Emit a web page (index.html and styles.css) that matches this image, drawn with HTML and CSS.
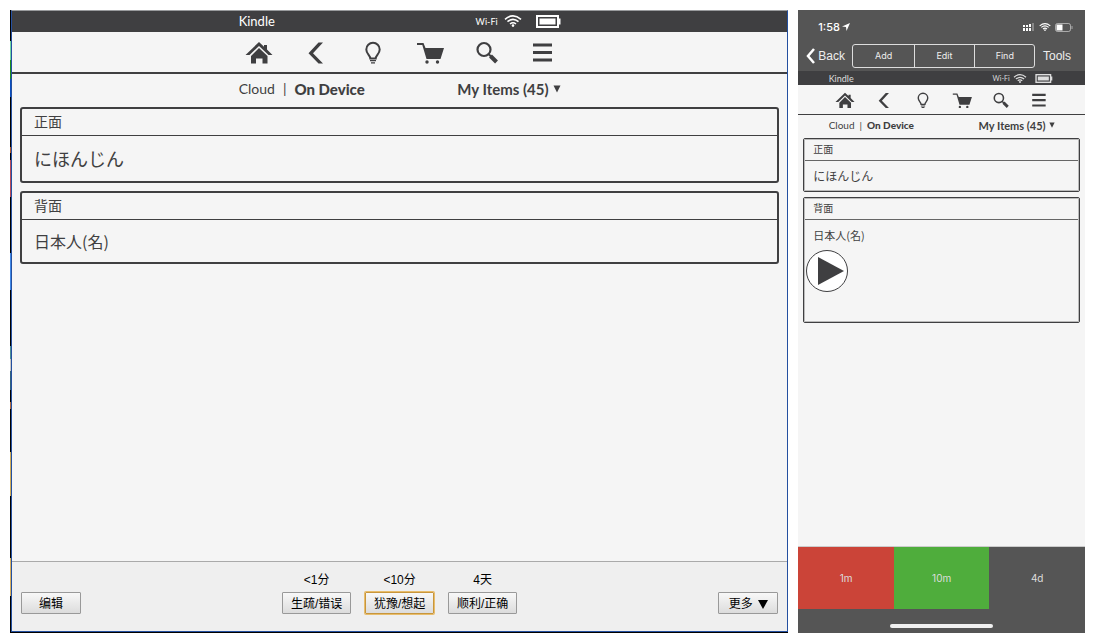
FILE: index.html
```html
<!DOCTYPE html>
<html lang="zh-CN">
<head>
<meta charset="utf-8">
<meta name="viewport" content="width=device-width, initial-scale=1">
<title>Kindle</title>
<link rel="stylesheet" href="styles.css">
</head>
<body>
<svg class="sprite" aria-hidden="true">
  <symbol id="home" viewBox="0 0 28 24">
    <path d="M14 1 19 5.800V4H22V8.600L27.500 14H23.500L14 5 4.500 14H.5Z"/>
    <path d="M14 7 22.500 15V22.500H17.500V17.500H11V22.500H6V15Z"/>
  </symbol>
  <symbol id="back" viewBox="0 0 28 24"><path d="M16.500 1.500H21L11 12.200 21 22.500H16.500L6.500 12.200Z"/></symbol>
  <symbol id="bulb" viewBox="0 0 28 24">
    <path d="M11.300 17.500C11.300 14.500 7.300 13 7.300 8.500A6.700 6.700 0 0 1 20.700 8.500C20.700 13 16.700 14.500 16.700 17.500Z" fill="none" stroke="currentColor" stroke-width="2"/>
    <path d="M11 19H17V20.300H11ZM12 21.300H16V22.500H12Z"/>
  </symbol>
  <symbol id="cart" viewBox="0 0 28 24">
    <path d="M1 2H7.500L9.500 7H28L24.500 18H10.500L6.300 4H1Z"/>
    <circle cx="11" cy="21" r="1.700"/><circle cx="21.500" cy="21" r="1.700"/>
  </symbol>
  <symbol id="search" viewBox="0 0 28 24">
    <circle cx="11" cy="8.500" r="6.500" fill="none" stroke="currentColor" stroke-width="2.200"/>
    <path d="M15.500 13 19 16.500" fill="none" stroke="currentColor" stroke-width="2"/>
    <path d="M17.500 15 23.500 21" fill="none" stroke="currentColor" stroke-width="4"/>
  </symbol>
  <symbol id="menu" viewBox="0 0 28 24"><path d="M3 2.500H22V5.500H3ZM3 10H22V13H3ZM3 17.500H22V20.500H3Z"/></symbol>
  <symbol id="wifi" viewBox="0 0 18 12">
    <g fill="none" stroke="currentColor" stroke-width="1.600">
      <path d="M1 4.300Q9-2.500 17 4.300M3.500 6.700Q9 2 14.500 6.700M6 9Q9 6.500 12 9"/>
    </g>
    <circle cx="9" cy="10.600" r="1.300"/>
  </symbol>
  <symbol id="battery" viewBox="0 0 25 13">
    <rect x="1" y="1" width="21" height="11" fill="none" stroke="currentColor" stroke-width="2"/>
    <path d="M3.500 3.500H19.500V9.500H3.500ZM22.500 3.500H24.500V9.500H22.500Z"/>
  </symbol>
  <symbol id="caret" viewBox="0 0 8 8"><path d="M.5.5H7.500L4 7.500Z"/></symbol>
</svg>

<main class="page">
  <section class="desktop" aria-label="Desktop">
    <div class="window">
      <header class="kindle">
        <div class="bar"><div class="inner">
          <span class="name">Kindle</span>
          <span class="net">Wi-Fi</span>
          <svg class="wifi"><use href="#wifi"/></svg>
          <svg class="battery"><use href="#battery"/></svg>
        </div></div>
        <nav class="nav">
          <button aria-label="Home"><svg><use href="#home"/></svg></button>
          <button aria-label="Back"><svg><use href="#back"/></svg></button>
          <button aria-label="Light"><svg><use href="#bulb"/></svg></button>
          <button aria-label="Store"><svg><use href="#cart"/></svg></button>
          <button aria-label="Search"><svg><use href="#search"/></svg></button>
          <button aria-label="Menu"><svg><use href="#menu"/></svg></button>
        </nav>
        <div class="inner source">
          <a href="#cloud">Cloud</a><span class="sep">|</span><a class="current" href="#device">On Device</a>
          <button class="items">My Items (45) <svg class="caret"><use href="#caret"/></svg></button>
        </div>
      </header>
      <div class="cards">
        <article class="card"><h2>正面</h2><p class="kana" lang="ja">にほんじん</p></article>
        <article class="card"><h2>背面</h2><p lang="ja">日本人(名)</p></article>
      </div>
      <footer class="answers">
        <button class="btn">编辑</button>
        <div class="grades">
          <div class="grade"><span>&lt;1分</span><button class="btn">生疏/错误</button></div>
          <div class="grade"><span>&lt;10分</span><button class="btn focus">犹豫/想起</button></div>
          <div class="grade"><span>4天</span><button class="btn">顺利/正确</button></div>
        </div>
        <button class="btn more">更多 <svg class="arrow" viewBox="0 0 10 9"><path d="M0 0H10L5 9Z"/></svg></button>
      </footer>
    </div>
  </section>

  <section class="phone" aria-label="Phone">
    <div class="status">
      <span>1:58</span>
      <svg class="locate" viewBox="0 0 8 8"><path d="M8 0 4.500 8 4 4 0 3.500Z"/></svg>
      <svg class="signal" viewBox="0 0 12 8">
        <path d="M0 2H2V4H0ZM3 2H5V4H3ZM6 1H8V4H6ZM0 5H2V8H0ZM3 5H5V8H3ZM6 5H8V8H6Z"/>
        <path d="M9 0H11V8H9Z" opacity=".3"/>
      </svg>
      <svg class="signal"><use href="#wifi"/></svg>
      <svg class="cell" viewBox="0 0 18 9">
        <rect x=".5" y=".5" width="15" height="8" rx="2" fill="none" stroke="currentColor" opacity=".5"/>
        <rect x="1.500" y="1.500" width="6" height="6"/><path d="M16.500 3H17.500V6H16.500Z" opacity=".5"/>
      </svg>
    </div>
    <div class="toolbar">
      <button><svg class="chev" viewBox="0 0 9 16"><path d="M8 1 2 8 8 15" fill="none" stroke="currentColor" stroke-width="2.500"/></svg>Back</button>
      <div class="segments"><button>Add</button><button>Edit</button><button>Find</button></div>
      <button>Tools</button>
    </div>
    <header class="kindle small">
      <div class="bar"><div class="inner">
        <span class="name">Kindle</span>
        <span class="net">Wi-Fi</span>
        <svg class="wifi"><use href="#wifi"/></svg>
        <svg class="battery"><use href="#battery"/></svg>
      </div></div>
      <nav class="nav">
        <button aria-label="Home"><svg><use href="#home"/></svg></button>
        <button aria-label="Back"><svg><use href="#back"/></svg></button>
        <button aria-label="Light"><svg><use href="#bulb"/></svg></button>
        <button aria-label="Store"><svg><use href="#cart"/></svg></button>
        <button aria-label="Search"><svg><use href="#search"/></svg></button>
        <button aria-label="Menu"><svg><use href="#menu"/></svg></button>
      </nav>
      <div class="inner source">
        <a href="#cloud">Cloud</a><span class="sep">|</span><a class="current" href="#device">On Device</a>
        <button class="items">My Items (45) <svg class="caret"><use href="#caret"/></svg></button>
      </div>
    </header>
    <div class="cards small">
      <article class="card"><h2>正面</h2><p class="kana" lang="ja">にほんじん</p></article>
      <article class="card"><h2>背面</h2><p lang="ja">日本人(名)</p>
        <button class="play" aria-label="Play"><svg viewBox="0 0 42 42"><circle cx="21" cy="21" r="20.500" fill="#fff" stroke="currentColor"/><path d="M12 7 38 21 12 35Z"/></svg></button>
      </article>
    </div>
    <footer class="ease">
      <div class="ease-row"><button class="again">1m</button><button class="good">10m</button><button>4d</button></div>
      <div class="home-bar"></div>
    </footer>
  </section>
</main>
</body>
</html>
```
FILE: styles.css
```css
* { box-sizing: border-box; }

body {
  margin: 0;
  background: #fff;
  color: #3f3f41;
  font-family: "Liberation Sans", "Noto Sans CJK SC", sans-serif;
}

button {
  margin: 0;
  padding: 0;
  border: 0;
  background: none;
  color: inherit;
  font: inherit;
}

a { color: inherit; text-decoration: none; }

svg { display: block; fill: currentColor; }

.sprite { position: absolute; width: 0; height: 0; }

.page {
  display: flex;
  gap: 10px;
  min-height: 100vh;
  padding: 10px;
}

/* Desktop window, with a sliver of wallpaper on its left and bottom edges */
.desktop {
  flex: 778;
  display: flex;
  padding: 0 0 1px 1px;
  background: linear-gradient(#000 5%, #6fd6a0 5% 8%, #1d8f1d 8% 11%, #0a4fc0 11% 14%, #000 14% 22%, #b4572a 22% 23%, #000 23% 24%, #b84a58 24% 30%, #000 30% 39%, #3f87e6 39% 45%, #000 45% 54%, #4c8e94 54% 56%, #c8c8c8 56% 58%, #33627c 58% 61%, #000 61% 63%, #b06a40 63% 64%, #000 64% 71%, #d0ad5a 71% 78%, #000 78% 88%, #d8b060 88% 94%, #000 94%);
}

.window {
  flex: 1;
  display: flex;
  flex-direction: column;
  border: 1px solid #2450a0;
  border-top-color: #999b9d;
  background: #f5f5f5;
}

/* Kindle header */
.kindle { font-family: Lato, sans-serif; }

.inner {
  display: flex;
  align-items: center;
  width: 322px;
  margin: 0 auto;
}

.bar { background: #3f3f41; color: #fff; }
.bar .inner { height: 21px; padding-bottom: 1px; font-size: 13px; }
.name { margin-right: auto; }
.net { margin-right: 6px; font-size: 9px; }
.wifi { width: 18px; height: 12px; margin-right: 14px; }
.battery { width: 25px; height: 13px; }

.nav {
  display: flex;
  justify-content: center;
  align-items: center;
  gap: 29px;
  height: 42px;
  padding: 2px 0 0 3px;
  border-bottom: 2px solid #3f3f41;
}
.nav svg { width: 28px; height: 24px; }

.source { height: 29px; font-size: 14px; }
.sep { margin: 0 8px; }
.current { font-size: 15px; font-weight: 900; }
.items { display: flex; align-items: center; gap: 4px; margin-left: auto; font-size: 15px; font-weight: 700; }
.caret { width: 8px; height: 8px; }

/* Flashcards */
.cards {
  flex: 1;
  display: flex;
  flex-direction: column;
  gap: 8px;
  padding: 4px 8px;
}
.card { border: 2px solid #3f3f41; border-radius: 3px; }
.card h2 {
  margin: 0;
  padding: 0 12px;
  border-bottom: 1px solid #3f3f41;
  font-size: 14px;
  font-weight: 400;
  line-height: 26px;
}
.card p {
  margin: 0;
  padding: 0 12px;
  font-family: "Noto Sans CJK JP", sans-serif;
  font-size: 16px;
  line-height: 42px;
}
.card .kana { padding-bottom: 1px; font-size: 18px; line-height: 44px; }

/* Desktop answer bar */
.answers {
  display: grid;
  grid-template-columns: 1fr auto 1fr;
  align-items: end;
  padding: 8px 9px 17px;
  border-top: 1px solid #aaa;
  background: #efefef;
  color: #000;
  font-size: 12px;
}
.grades { display: flex; gap: 14px; }
.grade { display: flex; flex-direction: column; align-items: center; }
.grade span { line-height: 20px; margin-bottom: 2px; }
.grade .btn { width: 69px; }
.btn {
  width: 60px;
  height: 22px;
  padding-top: 2px;
  border: 1px solid #999;
  border-radius: 1px;
  background: linear-gradient(#f8f8f8, #dcdcdc);
  line-height: 18px;
  white-space: nowrap;
}
.btn.focus { border-color: #c8963c; box-shadow: 0 0 0 1px #e8bd6c; }
.more { display: flex; align-items: center; justify-content: center; gap: 5px; justify-self: end; }
.arrow { width: 10px; height: 9px; }

/* Phone */
.phone {
  flex: 287;
  display: flex;
  flex-direction: column;
  background: #f5f5f5;
}

.status {
  display: flex;
  align-items: center;
  height: 31px;
  padding: 3px 12px 0 20px;
  background: #555;
  color: #fff;
  font: 500 11px Inter, sans-serif;
}
.locate { width: 8px; height: 8px; margin: 0 auto 0 2px; }
.signal { width: 12px; height: 8px; margin-right: 4px; }
.cell { width: 18px; height: 9px; }

.toolbar {
  display: flex;
  align-items: center;
  justify-content: space-between;
  height: 30px;
  padding: 0 14px 1px 8px;
  background: #555;
  color: #eee;
  font: 12px "Liberation Sans", sans-serif;
}
.toolbar > button { display: flex; align-items: center; gap: 3px; }
.chev { width: 9px; height: 16px; color: #fff; }
.segments {
  display: grid;
  grid-template-columns: repeat(3, 1fr);
  width: 183px;
  height: 24px;
  border: 1px solid #ddd;
  border-radius: 3px;
  font: 9px Inter, sans-serif;
}
.segments button + button { border-left: 1px solid #ddd; }

.small .inner { width: 226px; }
.small .bar .inner { height: 14px; padding: 0 2px 0 0; font-size: 9px; }
.small .bar { color: #ddd; }
.small .net { margin-right: 3px; font-size: 7px; }
.small .wifi { width: 14px; height: 9px; margin-right: 8px; }
.small .battery { width: 18px; height: 9px; }
.small .nav { gap: 19px; height: 30px; padding: 1px 0 0 2px; border-bottom-width: 1px; }
.small .nav svg { width: 20px; height: 17px; }
.small .source { height: 20px; font-size: 10px; }
.small .sep { margin: 0 5px; }
.small .current { font-size: 10px; }
.small .items { gap: 3px; font-size: 11px; }
.small .caret { width: 6px; height: 6px; }

.cards.small { gap: 5px; padding: 3px 5px; }
.small .card { border-width: 1px; outline: 1px solid #bbb; outline-offset: -2px; border-radius: 2px; }
.small .card h2 { padding: 0 9px; border-color: #666; font-size: 10px; line-height: 21px; }
.small .card p { padding: 0 9px; font-size: 11px; line-height: 30px; }
.small .card .kana { padding-bottom: 0; font-size: 12px; }
.play { display: block; margin: 0 0 30px 2px; }
.play svg { width: 42px; height: 42px; }

.ease { background: #555; }
.ease-row { display: grid; grid-template-columns: repeat(3, 1fr); border-top: 1px solid #ccc; }
.ease-row button { height: 62px; color: #ddd; font: 10px Inter, sans-serif; }
.ease-row .again { background: #cb4438; }
.ease-row .good { background: #4fad3c; }
.home-bar { width: 103px; height: 4px; margin: 15px auto 5px; border-radius: 2px; background: #f0f0f0; }
```
